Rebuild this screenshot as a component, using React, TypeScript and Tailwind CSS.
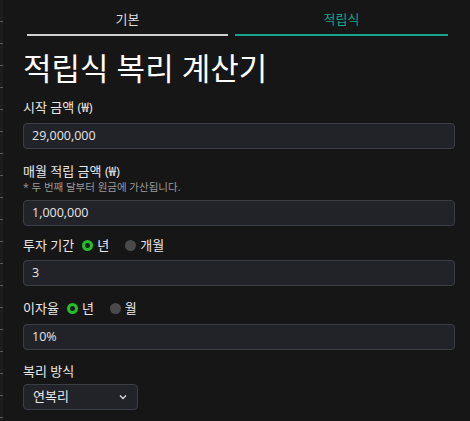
import React from "react";

function Radio({ checked, label }: { checked: boolean; label: string }) {
  return (
    <span className="flex items-center gap-[4px]">
      {checked ? (
        <span className="w-[11px] h-[11px] rounded-full border-[3px] border-[#22c02a] bg-[#1b1b1b]" />
      ) : (
        <span className="w-[11px] h-[11px] rounded-full bg-[#4a4a4a]" />
      )}
      <span>{label}</span>
    </span>
  );
}

function Input({ value }: { value: string }) {
  return (
    <div className="h-[26px] rounded-[4px] border border-[#3b3f45] bg-[#212328] flex items-center px-[8px] text-[12.5px] text-[#e6e6e6]">
      {value}
    </div>
  );
}

export default function App() {
  const ticks = Array.from({ length: 19 });
  return (
    <div
      className="w-[470px] h-[421px] bg-[#161616] flex overflow-hidden text-[#e8e8e8]"
      style={{ fontFamily: '"Open Sans", "Noto Sans CJK KR", sans-serif' }}
    >
      <div className="w-[3px] shrink-0 bg-[#1c1c1c] flex flex-col">
        {ticks.map((_, i) => (
          <div key={i} className="h-[22px] shrink-0 border-b border-[#5a5a5a]" />
        ))}
      </div>
      <div className="flex-1 pl-[20px] pr-[15px]">
        <div className="flex gap-[7px] pl-[4px] pr-[4px]">
          <div className="w-[201px] h-[36px] flex items-end justify-center pb-[6px] leading-[18px] border-b-2 border-[#cfcfcf] text-[13px] text-[#dcdcdc]">
            기본
          </div>
          <div className="w-[213px] h-[36px] flex items-end justify-center pb-[6px] leading-[18px] border-b-2 border-[#14a58c] text-[13px] text-[#14a58c]">
            적립식
          </div>
        </div>
        <div className="mt-[15px] text-[31px] leading-[34px] text-white">적립식 복리 계산기</div>
        <div className="mt-[13px] text-[13px] leading-[18px]">시작 금액 (₩)</div>
        <div className="mt-[7px]">
          <Input value="29,000,000" />
        </div>
        <div className="mt-[13px] text-[13px] leading-[18px]">매월 적립 금액 (₩)</div>
        <div className="text-[10.5px] leading-[14px] text-[#9a9a9a]">* 두 번째 달부터 원금에 가산됩니다.</div>
        <div className="mt-[6px]">
          <Input value="1,000,000" />
        </div>
        <div className="mt-[10px] text-[13px] leading-[18px] flex items-center gap-[8px]">
          <span>투자 기간</span>
          <Radio checked label="년" />
          <span className="ml-[8px]">
            <Radio checked={false} label="개월" />
          </span>
        </div>
        <div className="mt-[6px]">
          <Input value="3" />
        </div>
        <div className="mt-[13px] text-[13px] leading-[18px] flex items-center gap-[8px]">
          <span>이자율</span>
          <Radio checked label="년" />
          <span className="ml-[8px]">
            <Radio checked={false} label="월" />
          </span>
        </div>
        <div className="mt-[7px]">
          <Input value="10%" />
        </div>
        <div className="mt-[12px] text-[13px] leading-[18px]">복리 방식</div>
        <div className="mt-[4px] w-[115px] h-[26px] rounded-[4px] border border-[#3b3f45] bg-[#212328] flex items-center justify-between px-[9px] text-[13px]">
          <span>연복리</span>
          <svg width="10" height="10" viewBox="0 0 10 10" fill="none" stroke="#dcdcdc" strokeWidth="1.3">
            <path d="M2 3.5 L5 6.5 L8 3.5" />
          </svg>
        </div>
      </div>
    </div>
  );
}
